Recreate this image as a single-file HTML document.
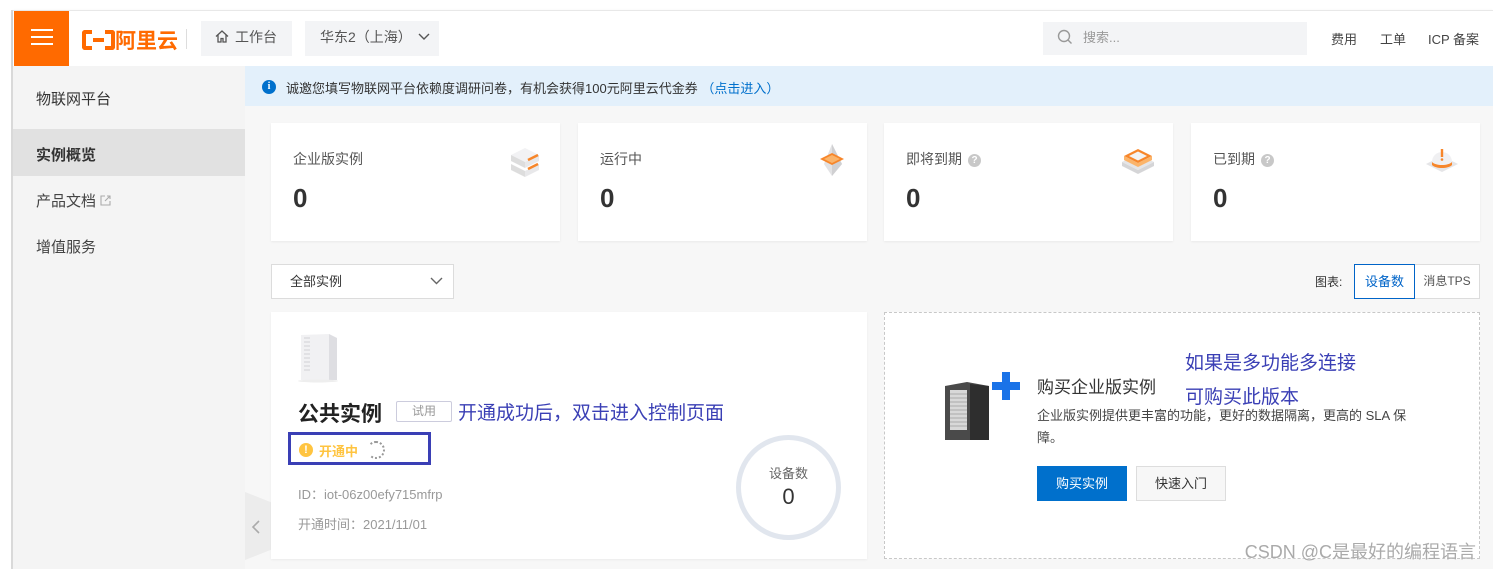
<!DOCTYPE html>
<html><head><meta charset="utf-8"><style>
*{margin:0;padding:0;box-sizing:border-box}
body{width:1493px;height:569px;overflow:hidden;background:#fff;font-family:"Liberation Sans","Noto Sans CJK SC",sans-serif;color:#333;position:relative}
.a{position:absolute}
.card{position:absolute;background:#fff;top:123px;height:118px;width:289px;box-shadow:0 1px 2px rgba(0,0,0,.06)}
.card .t{position:absolute;left:22px;top:26px;font-size:14px;color:#555}
.card .n{position:absolute;left:22px;top:60px;font-size:26px;font-weight:bold;color:#333}
.q{display:inline-block;width:13px;height:13px;border-radius:50%;background:#c8c8c8;color:#fff;font-size:10px;text-align:center;line-height:13px;vertical-align:1px;margin-left:6px;font-weight:bold}
.blue{color:#3a3fb5}
</style></head><body>
<div class="a" style="left:11px;top:10px;width:1482px;height:559px;background:#f7f7f7;border-left:2px solid #d9d9d9"></div>
<div class="a" style="left:13px;top:10px;width:1480px;height:56px;background:#fff;box-shadow:0 1px 3px rgba(0,0,0,.08);border-top:1px solid #e8e8e8"></div>
<div class="a" style="left:14px;top:11px;width:55px;height:55px;background:#ff6a00"></div>
<div class="a" style="left:31px;top:29px;width:22px;height:2px;background:#fff;box-shadow:0 7px 0 #fff,0 14px 0 #fff"></div>
<div class="a" style="left:82px;top:25px;font-size:21px;font-weight:bold;color:#ff6a00">
<span style="display:inline-block;width:33px;height:20px;vertical-align:-2px;position:relative"><span style="position:absolute;left:0;top:0;width:10px;height:20px;border:4px solid #ff6a00;border-right:none;border-radius:3px 0 0 3px"></span><span style="position:absolute;right:0;top:0;width:10px;height:20px;border:4px solid #ff6a00;border-left:none;border-radius:0 3px 3px 0"></span><span style="position:absolute;left:11px;top:8px;width:11px;height:4px;background:#ff6a00"></span></span>阿里云</div>
<div class="a" style="left:186px;top:29px;width:1px;height:20px;background:#ddd"></div>
<div class="a" style="left:201px;top:21px;width:91px;height:35px;background:#f3f4f6;font-size:14px;color:#555;line-height:33px;padding-left:14px">
<svg width="14" height="13" viewBox="0 0 14 13" style="vertical-align:-1px;margin-right:6px"><path d="M1 6.5L7 1l6 5.5M3 5v7h3V8.5h2V12h3V5" fill="none" stroke="#555" stroke-width="1.3"/></svg>工作台</div>
<div class="a" style="left:305px;top:21px;width:134px;height:35px;background:#f3f4f6;font-size:14px;color:#555;line-height:33px;padding-left:15px">华东2（上海）<svg width="12" height="8" viewBox="0 0 12 8" style="margin-left:6px;vertical-align:1px"><path d="M1 1l5 5 5-5" fill="none" stroke="#555" stroke-width="1.4"/></svg></div>
<div class="a" style="left:1043px;top:22px;width:264px;height:33px;background:#f3f4f6;font-size:13px;color:#999;line-height:31px;padding-left:40px">搜索...</div>
<svg class="a" style="left:1057px;top:29px" width="16" height="16" viewBox="0 0 16 16"><circle cx="7" cy="7" r="5.5" fill="none" stroke="#999" stroke-width="1.4"/><path d="M11 11l3.5 3.5" stroke="#999" stroke-width="1.4"/></svg>
<div class="a" style="left:1331px;top:29px;font-size:13px;color:#444">费用</div>
<div class="a" style="left:1380px;top:29px;font-size:13px;color:#444">工单</div>
<div class="a" style="left:1428px;top:29px;font-size:13px;color:#444">ICP 备案</div>
<div class="a" style="left:13px;top:66px;width:232px;height:503px;background:#f4f4f4"></div>
<div class="a" style="left:36px;top:88px;font-size:15px;color:#333">物联网平台</div>
<div class="a" style="left:13px;top:129px;width:232px;height:47px;background:#e1e1e1"></div>
<div class="a" style="left:36px;top:144px;font-size:15px;font-weight:bold;color:#333">实例概览</div>
<div class="a" style="left:36px;top:190px;font-size:15px;color:#444">产品文档 <svg width="11" height="11" viewBox="0 0 11 11" style="vertical-align:0"><path d="M5 1H1v9h9V6M7 1h3v3M10 1L5 6" fill="none" stroke="#aaa" stroke-width="1.1"/></svg></div>
<div class="a" style="left:36px;top:236px;font-size:15px;color:#444">增值服务</div>
<div class="a" style="left:245px;top:492px;width:26px;height:68px;background:#ececec;clip-path:polygon(0 0,100% 15%,100% 85%,0 100%)"></div>
<svg class="a" style="left:251px;top:520px" width="10" height="14" viewBox="0 0 10 14"><path d="M8 1L2 7l6 6" fill="none" stroke="#aaa" stroke-width="1.6"/></svg>
<div class="a" style="left:245px;top:66px;width:1248px;height:40px;background:#e3f0fb"></div>
<div class="a" style="left:262px;top:80px;width:14px;height:14px;border-radius:50%;background:#0070cc;color:#fff;font-size:10px;font-weight:bold;text-align:center;line-height:14px;font-family:'Liberation Serif',serif">i</div>
<div class="a" style="left:286px;top:78px;font-size:13px;color:#333">诚邀您填写物联网平台依赖度调研问卷，有机会获得100元阿里云代金券 <span style="color:#0070cc">（点击进入）</span></div>
<div class="card" style="left:271px"><div class="t">企业版实例</div><div class="n">0</div>
<svg class="a" style="left:237px;top:22px" width="34" height="34" viewBox="0 0 34 34"><path d="M3 10l14-7 14 7-14 7z" fill="#f2f2f4"/><path d="M3 10v6l14 7V17z" fill="#ddd"/><path d="M31 10v6l-14 7V17z" fill="#e8e8ea"/><path d="M3 19v6l14 7v-6z" fill="#ddd"/><path d="M31 19v6l-14 7v-6z" fill="#e8e8ea"/><path d="M20 15l10-5M20 24l10-5" stroke="#f7862a" stroke-width="2.5"/></svg></div>
<div class="card" style="left:578px"><div class="t">运行中</div><div class="n">0</div>
<svg class="a" style="left:237px;top:19px" width="34" height="36" viewBox="0 0 34 36"><path d="M17 2l-8 20 8 12 10-12z" fill="#e2e2e4"/><path d="M17 2l10 20-10 12z" fill="#d0d0d2"/><path d="M5 17l12-6 12 6-12 6z" fill="#f7862a"/><path d="M9 17l8-4 8 4-8 4z" fill="#fbb46a"/></svg></div>
<div class="card" style="left:884px"><div class="t">即将到期<span class="q">?</span></div><div class="n">0</div>
<svg class="a" style="left:236px;top:19px" width="36" height="36" viewBox="0 0 36 36"><path d="M2 20l16-8 16 8-16 8z" fill="#e5e5e7"/><path d="M2 20v4l16 8v-4zM34 20v4l-16 8v-4z" fill="#d5d5d7"/><path d="M4 14l14-7 14 7-14 7z" fill="#f7862a"/><path d="M4 14v4l14 7v-4zM32 14v4l-14 7v-4z" fill="#fbb46a"/><path d="M9 14l9-4.5 9 4.5-9 4.5z" fill="#f3f3f3"/></svg></div>
<div class="card" style="left:1191px"><div class="t">已到期<span class="q">?</span></div><div class="n">0</div>
<svg class="a" style="left:233px;top:17px" width="36" height="36" viewBox="0 0 36 36"><path d="M2 24l16-8 16 8-16 8z" fill="#e5e5e7"/><path d="M8 22a10 10 0 0 1 20 0v2c-4 4-16 4-20 0z" fill="#f0f0f2"/><path d="M8 22c4 4 16 4 20 0v3c-4 4-16 4-20 0z" fill="#f7862a"/><rect x="16.8" y="9" width="2.4" height="8" fill="#f7862a"/><circle cx="18" cy="19.5" r="1.3" fill="#f7862a"/></svg></div>
<div class="a" style="left:271px;top:264px;width:183px;height:35px;background:#fff;border:1px solid #dcdcdc;font-size:13px;line-height:33px;padding-left:18px;color:#333">全部实例</div>
<svg class="a" style="left:430px;top:277px" width="13" height="8" viewBox="0 0 13 8"><path d="M1 1l5.5 5.5L12 1" fill="none" stroke="#666" stroke-width="1.4"/></svg>
<div class="a" style="left:1315px;top:273px;font-size:12px;color:#333">图表:</div>
<div class="a" style="left:1354px;top:264px;width:61px;height:35px;border:1px solid #0064c8;background:#fff;font-size:13px;color:#0064c8;text-align:center;line-height:33px">设备数</div>
<div class="a" style="left:1415px;top:264px;width:65px;height:35px;border:1px solid #dcdcdc;border-left:none;background:#fff;font-size:12px;color:#555;text-align:center;line-height:33px">消息TPS</div>
<div class="a" style="left:271px;top:312px;width:596px;height:247px;background:#fff;box-shadow:0 1px 2px rgba(0,0,0,.05)"></div>
<svg class="a" style="left:295px;top:331px" width="45" height="52" viewBox="0 0 45 52"><path d="M6 4l28-1v46H6z" fill="#f1f1f3"/><path d="M34 3l8 4v42h-8z" fill="#dedee2"/><path d="M9 7h6M9 11h6M9 15h6M9 19h6M9 23h6M9 27h6M9 31h6M9 35h6M9 39h6" stroke="#dcdce0" stroke-width="1.5"/><ellipse cx="23" cy="50" rx="20" ry="1.5" fill="#eee"/></svg>
<div class="a" style="left:298px;top:398px;font-size:21px;font-weight:bold;color:#222">公共实例</div>
<div class="a" style="left:396px;top:401px;width:56px;height:21px;border:1px solid #ccd;border-radius:2px;font-size:12px;color:#999;text-align:center;line-height:19px">试用</div>
<div class="a blue" style="left:458px;top:398px;font-size:19px">开通成功后，双击进入控制页面</div>
<div class="a" style="left:288px;top:432px;width:143px;height:33px;border:3px solid #3a3fb5"></div>
<div class="a" style="left:299px;top:443px;width:14px;height:14px;border-radius:50%;background:#ffc440;color:#fff;font-size:11px;font-weight:bold;text-align:center;line-height:14px">!</div>
<div class="a" style="left:319px;top:441px;font-size:13px;font-weight:bold;color:#ffc440">开通中</div>
<div class="a" style="left:367px;top:441px;width:18px;height:18px;border-radius:50%;border:2px dotted #999;border-left-color:transparent"></div>
<div class="a" style="left:298px;top:484px;font-size:13px;color:#999">ID：iot-06z00efy715mfrp</div>
<div class="a" style="left:298px;top:514px;font-size:13px;color:#999">开通时间：2021/11/01</div>
<div class="a" style="left:736px;top:435px;width:105px;height:105px;border-radius:50%;border:5px solid #e1e6ee"></div>
<div class="a" style="left:736px;top:463px;width:105px;text-align:center;font-size:13px;color:#666">设备数</div>
<div class="a" style="left:736px;top:484px;width:105px;text-align:center;font-size:22px;color:#333">0</div>
<div class="a" style="left:884px;top:312px;width:596px;height:247px;background:#fff;border:1px dashed #c8c8c8"></div>
<svg class="a" style="left:940px;top:372px" width="88" height="72" viewBox="0 0 88 72"><path d="M5 14l22-4 22 4v54H5z" fill="#4a4a4a"/><path d="M30 12l19 2v54H30z" fill="#2e2e2e"/><rect x="10" y="18" width="17" height="40" fill="#d8d8d8"/><path d="M10 22h17M10 26h17M10 30h17M10 34h17M10 38h17M10 42h17M10 46h17M10 50h17M10 54h17" stroke="#aaa" stroke-width="1"/><path d="M62 0h8v10h10v8H70v10h-8V18H52v-8h10z" fill="#1a73e8"/></svg>
<div class="a" style="left:1037px;top:373px;font-size:17px;color:#333">购买企业版实例</div>
<div class="a blue" style="left:1185px;top:348px;font-size:19px">如果是多功能多连接</div>
<div class="a blue" style="left:1185px;top:382px;font-size:19px">可购买此版本</div>
<div class="a" style="left:1037px;top:405px;font-size:13px;color:#444;width:382px;line-height:22px">企业版实例提供更丰富的功能，更好的数据隔离，更高的 SLA 保障。</div>
<div class="a" style="left:1037px;top:466px;width:90px;height:35px;background:#0070cc;color:#fff;font-size:13px;text-align:center;line-height:35px">购买实例</div>
<div class="a" style="left:1136px;top:466px;width:90px;height:35px;background:#f7f7f7;border:1px solid #ddd;color:#333;font-size:13px;text-align:center;line-height:33px">快速入门</div>
<div class="a" style="left:1150px;top:538px;width:326px;text-align:right;font-size:18px;color:#aaa;text-shadow:0 0 1px #fff">CSDN @C是最好的编程语言</div>
</body></html>
